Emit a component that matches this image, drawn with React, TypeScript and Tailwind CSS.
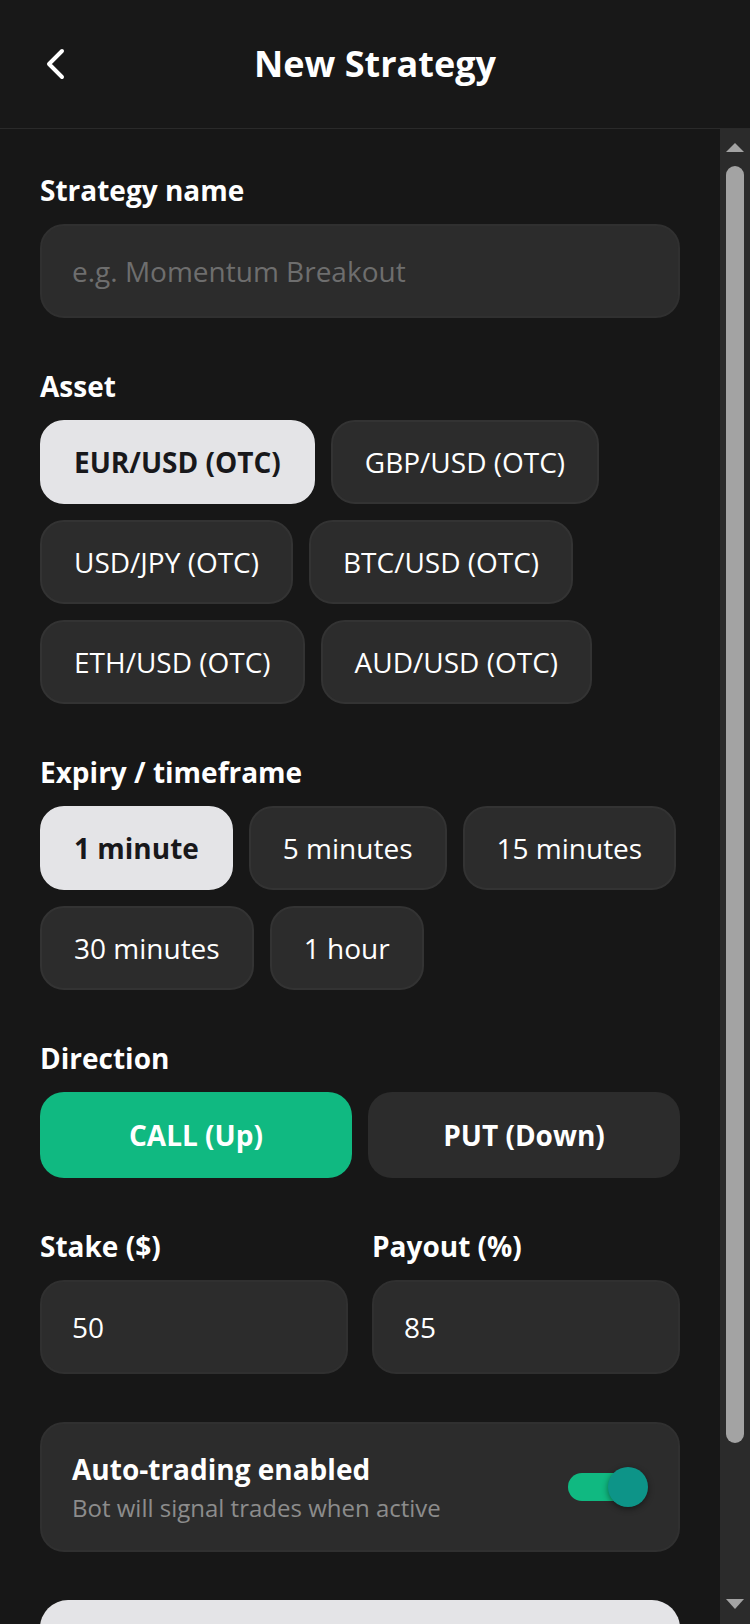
import React from 'react';

const assets = ['EUR/USD (OTC)', 'GBP/USD (OTC)', 'USD/JPY (OTC)', 'BTC/USD (OTC)', 'ETH/USD (OTC)', 'AUD/USD (OTC)'];
const expiries = ['1 minute', '5 minutes', '15 minutes', '30 minutes', '1 hour'];

function Label({ children }: { children: React.ReactNode }) {
  return <div className="h-[40px] mb-[14px] text-[28px] leading-[40px] font-bold text-white">{children}</div>;
}

function Chip({ label, active }: { label: string; active?: boolean }) {
  return (
    <button
      className={
        active
          ? 'h-[84px] px-8 rounded-[24px] border-2 border-[#e4e4e7] bg-[#e4e4e7] text-[#18181b] text-[28px] font-bold'
          : 'h-[84px] px-8 rounded-[24px] border-2 border-[#333333] bg-[#2c2c2c] text-white text-[28px]'
      }
    >
      {label}
    </button>
  );
}

function ScrollTrack() {
  return (
    <div className="w-[30px] shrink-0 bg-[#2b2b2b] flex flex-col items-center pt-[14px] pb-[15px]">
      <svg width="18" height="9" viewBox="0 0 18 9">
        <polygon points="0,9 9,0 18,9" fill="#a3a3a3" />
      </svg>
      <div className="mt-[14px] w-[18px] h-[1277px] rounded-full bg-[#a3a3a3]" />
      <div className="flex-1" />
      <svg width="18" height="10" viewBox="0 0 18 10">
        <polygon points="0,0 18,0 9,10" fill="#a3a3a3" />
      </svg>
    </div>
  );
}

export default function App() {
  return (
    <div className="h-[1624px] w-[750px] flex flex-col bg-[#171717] font-['Open_Sans',sans-serif] overflow-hidden">
      <header className="h-[129px] shrink-0 border-b border-[#2a2a2a] bg-[#181818] grid grid-cols-[1fr_auto_1fr] items-center">
        <div className="pl-[45px] flex items-center">
          <svg width="22" height="32" viewBox="0 0 22 32" fill="none">
            <polyline points="17,3 4,16 17,29" stroke="white" strokeWidth="4" strokeLinecap="round" strokeLinejoin="round" />
          </svg>
        </div>
        <h1 className="text-[36px] font-bold text-white leading-[48px]">New Strategy</h1>
        <div />
      </header>

      <div className="flex-1 flex overflow-hidden">
        <main className="flex-1 overflow-hidden px-10 pt-[41px] flex flex-col gap-[48px]">
          <section>
            <Label>Strategy name</Label>
            <div className="h-[94px] rounded-[24px] border-2 border-[#303030] bg-[#2c2c2c] px-[30px] flex items-center text-[28px] text-[#6e6e6e]">
              e.g. Momentum Breakout
            </div>
          </section>

          <section>
            <Label>Asset</Label>
            <div className="flex flex-wrap gap-4">
              {assets.map((a, i) => (
                <Chip key={a} label={a} active={i === 0} />
              ))}
            </div>
          </section>

          <section>
            <Label>Expiry / timeframe</Label>
            <div className="flex flex-wrap gap-4">
              {expiries.map((e, i) => (
                <Chip key={e} label={e} active={i === 0} />
              ))}
            </div>
          </section>

          <section>
            <Label>Direction</Label>
            <div className="grid grid-cols-2 gap-4">
              <button className="h-[86px] rounded-[24px] bg-[#10b981] text-white text-[28px] font-bold">CALL (Up)</button>
              <button className="h-[86px] rounded-[24px] bg-[#2c2c2c] text-white text-[28px] font-bold">PUT (Down)</button>
            </div>
          </section>

          <section className="grid grid-cols-2 gap-6">
            <div>
              <Label>Stake ($)</Label>
              <div className="h-[94px] rounded-[24px] border-2 border-[#303030] bg-[#2c2c2c] px-[30px] flex items-center text-[28px] text-white">
                50
              </div>
            </div>
            <div>
              <Label>Payout (%)</Label>
              <div className="h-[94px] rounded-[24px] border-2 border-[#303030] bg-[#2c2c2c] px-[30px] flex items-center text-[28px] text-white">
                85
              </div>
            </div>
          </section>

          <section className="h-[130px] shrink-0 rounded-[24px] border-2 border-[#303030] bg-[#2c2c2c] px-[30px] flex items-center justify-between">
            <div className="flex flex-col mt-1">
              <span className="text-[28px] leading-[38px] font-bold text-white">Auto-trading enabled</span>
              <span className="text-[24px] leading-[40px] text-[#8c8c8c]">Bot will signal trades when active</span>
            </div>
            <div className="relative w-[80px] h-[40px] flex items-center">
              <div className="w-[72px] h-[28px] rounded-full bg-[#10b981]" />
              <div className="absolute right-0 top-0 w-[40px] h-[40px] rounded-full bg-[#0d9488] shadow-[0_2px_6px_rgba(0,0,0,0.45)]" />
            </div>
          </section>

          <button className="h-[140px] shrink-0 rounded-[28px] bg-[#e4e4e7] text-[#18181b] text-[28px] font-bold">
            Save Strategy
          </button>
        </main>
        <ScrollTrack />
      </div>
    </div>
  );
}
